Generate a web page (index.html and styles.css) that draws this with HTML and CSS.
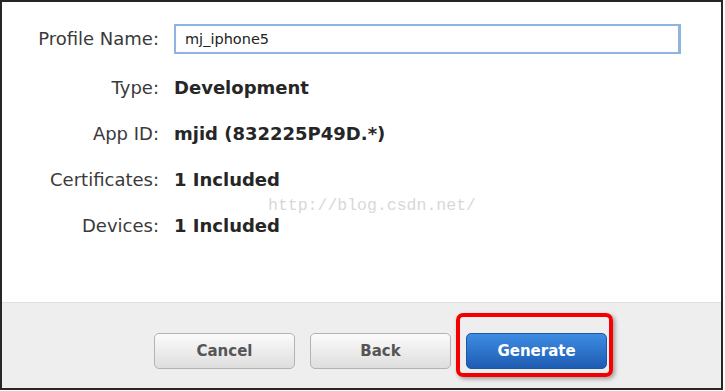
FILE: index.html
```html
<!DOCTYPE html>
<html lang="en">
<head>
    <meta charset="UTF-8">
    <title>Generate Provisioning Profile</title>
    <link rel="stylesheet" href="styles.css">
</head>
<body>
    <div class="dialog">
        <div class="dialog-body">
            <div class="profile-form">
                <label class="field-label" for="profile-name">Profile Name:</label>
                <div class="field-value">
                    <input id="profile-name" class="name-input" type="text" value="mj_iphone5">
                </div>

                <span class="field-label">Type:</span>
                <span class="field-value">Development</span>

                <span class="field-label">App ID:</span>
                <span class="field-value">mjid (832225P49D.*)</span>

                <span class="field-label">Certificates:</span>
                <span class="field-value">1 Included</span>

                <span class="field-label">Devices:</span>
                <span class="field-value">1 Included</span>
            </div>
            <span class="watermark">http://blog.csdn.net/</span>
        </div>

        <div class="dialog-footer">
            <button class="btn btn-default">Cancel</button>
            <button class="btn btn-default">Back</button>
            <div class="highlight-wrap">
                <button class="btn btn-primary">Generate</button>
                <span class="highlight"></span>
            </div>
        </div>
    </div>
</body>
</html>
```

FILE: styles.css
```css
body {
    margin: 0;
    background: #fff;
    font-family: "DejaVu Sans", "Liberation Sans", sans-serif;
}

.dialog {
    width: 723px;
    height: 390px;
    box-sizing: border-box;
    border: 2px solid #262626;
    display: flex;
    flex-direction: column;
    background: #fff;
}

.dialog-body {
    position: relative;
    height: 300px;
    padding-top: 22px;
    box-sizing: border-box;
}

.profile-form {
    display: grid;
    grid-template-columns: 157px 1fr;
    column-gap: 15px;
    row-gap: 22px;
    align-items: center;
}

.field-label {
    text-align: right;
    font-size: 18px;
    color: #3a3a3a;
    line-height: 24px;
}

.field-value {
    font-size: 18px;
    font-weight: bold;
    color: #262626;
    line-height: 24px;
}

.name-input {
    display: block;
    width: 507px;
    height: 30px;
    box-sizing: border-box;
    border: 2px solid #8fb4e0;
    border-right-width: 3px;
    box-shadow: inset 0 0 1px #c7daf0;
    padding: 0 9px;
    font-family: "DejaVu Sans", sans-serif;
    font-size: 14.5px;
    color: #222;
    outline: none;
}

.watermark {
    position: absolute;
    left: 266px;
    top: 194px;
    font-family: "Liberation Mono", monospace;
    font-size: 16.5px;
    color: #d8d8d8;
}

.dialog-footer {
    flex: 1;
    background: #eeeeee;
    border-top: 1px solid #e0e0e0;
    display: flex;
    align-items: flex-start;
    gap: 15px;
    padding: 30px 0 0 152px;
}

.btn {
    width: 141px;
    height: 36px;
    border-radius: 5px;
    font-family: "DejaVu Sans", sans-serif;
    font-size: 15px;
    font-weight: bold;
    cursor: pointer;
}

.btn-default {
    background: linear-gradient(#fbfbfb, #dedede);
    border: 1px solid #b3b3b3;
    color: #555;
}

.btn-primary {
    display: block;
    background: linear-gradient(#3d8ce2, #1e5cb3);
    border: 1px solid #1c58a6;
    color: #fff;
}

.highlight-wrap {
    position: relative;
}

.highlight {
    position: absolute;
    left: -10px;
    top: -20px;
    right: -6px;
    bottom: -8px;
    border: 4px solid #f50000;
    border-radius: 7px;
    box-shadow: 2px 2px 4px rgba(0, 0, 0, 0.35);
}
```
